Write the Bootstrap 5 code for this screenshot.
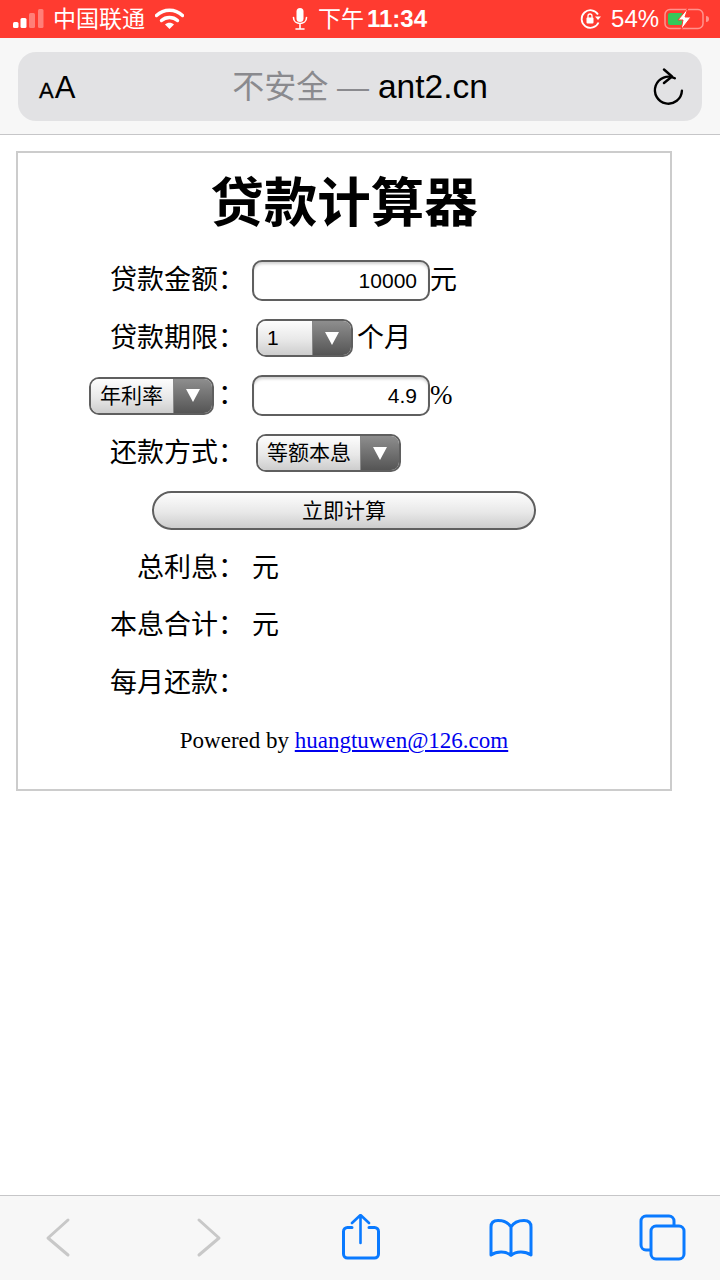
<!DOCTYPE html>
<html lang="zh-CN">

<head>
  <meta charset="UTF-8" />
  <meta name="viewport" content="width=device-width, initial-scale=1" />
  <title>贷款计算器</title>
  <link href="https://cdn.jsdelivr.net/npm/bootstrap@5.3.3/dist/css/bootstrap.min.css" rel="stylesheet" />
  <style>
    body {
      width: 720px;
      height: 1280px;
      overflow: hidden;
      background: #fff;
      color: #000;
      font-family: "Liberation Sans", "Noto Sans CJK SC", sans-serif;
    }

    .status-bar {
      height: 38px;
      background: #ff3b30;
      color: #fff;
      font-size: 23px;
      line-height: 38px;
      white-space: nowrap;
    }

    .status-bar svg { flex: none; }
    .carrier { margin: 0 10px 0 4px; width: 92px; }
    .mic-icon { margin-left: 108px; }
    .clock { margin-left: 10px; }
    .clock b { font-weight: 700; font-size: 24px; margin-left: 3px; }
    .lock-icon { margin-left: 153px; }
    .batt-text { margin: 0 5px 0 10px; font-size: 24px; }

    .url-area {
      height: 97px;
      padding: 14px 18px 13px;
      background: #f7f7f7;
      border-bottom: 1px solid #c6c6c8;
    }

    .url-pill {
      height: 69px;
      background: #e2e2e4;
      border-radius: 18px;
      padding: 0 16px 0 21px;
    }

    .aa-text { width: 60px; line-height: 1; white-space: nowrap; padding-top: 2px; }
    .aa-small { font-size: 22px; -webkit-text-stroke: .3px #000; }
    .aa-big { font-size: 31px; margin-left: 1px; }
    .url-text { font-size: 32px; line-height: 1; white-space: nowrap; }
    .url-text .dim { color: #8a8a8e; }
    .url-host { font-size: 33.500px; }
    .reload-box { width: 65px; }

    .page-area { padding: 16px 48px 0 16px; }

    .calc-box {
      height: 640px;
      border: 2px solid #ccc;
    }

    .calc-title {
      height: 99px;
      margin: 0;
      font-size: 53.500px;
      font-weight: 700;
      line-height: 102px;
      text-align: center;
    }

    .calc-row {
      height: 57.500px;
      font-size: 27px;
      line-height: 1;
    }

    .calc-label {
      width: 227px;
      flex: none;
      text-align: right;
      white-space: nowrap;
    }

    .calc-value { padding-left: 7px; white-space: nowrap; }
    .calc-value.sel-gap { padding-left: 11px; }

    .ios-input {
      width: 178px;
      height: 41px;
      border: 2px solid #5f5f5f;
      border-radius: 10px;
      padding: 0 11px 0 0;
      font-size: 21px;
      text-align: right;
      color: #000;
      background: #fff;
      box-shadow: inset 0 3px 3px -1px #d0d0d0;
      font-family: inherit;
    }

    .ios-select {
      height: 38px;
      border: 2px solid #5f5f5f;
      border-radius: 10px;
      overflow: hidden;
      font-size: 21px;
      text-align: left;
    }

    .ios-select .sel-text {
      padding-left: 9px;
      line-height: 34px;
      background: linear-gradient(#fdfdfd, #e8e8e8 55%, #cdcdcd);
      border-right: 1px solid #888;
    }

    .ios-select .sel-arrow {
      width: 38px;
      background: linear-gradient(#8e8e8e, #555);
    }

    .ios-select .sel-arrow::after {
      content: "";
      border-left: 7px solid transparent;
      border-right: 7px solid transparent;
      border-top: 13px solid #fff;
    }

    .select-after { margin-left: 4px; }
    .select-colon { margin-right: 4px; }

    .calc-submit {
      display: block;
      width: 384px;
      height: 39px;
      padding: 0;
      margin-left: 134px;
      border: 2px solid #5f5f5f;
      border-radius: 20px;
      background: linear-gradient(#fdfdfd, #e8e8e8 55%, #cdcdcd);
      font-size: 21px;
      line-height: 34px;
      color: #000;
    }

    .powered {
      font-family: "Liberation Serif", serif;
      font-size: 23px;
      text-align: center;
    }

    .powered a { color: #0000ee; }
    .percent-sign { font-family: "Liberation Serif", serif; }
    .w-one { width: 55px; }
    .w-three { width: 83px; }
    .w-four { width: 103px; }

    .tool-bar {
      height: 85px;
      background: #f7f7f7;
      border-top: 1px solid #c6c6c8;
      padding: 0 34px 0 35px;
    }
  </style>
</head>

<body class="d-flex flex-column">

  <!-- iOS status bar -->
  <div class="status-bar d-flex align-items-center ps-2">
    <svg width="37" height="24" viewBox="0 0 37 24" class="ms-1">
      <rect x="1" y="15" width="5.500" height="6" rx="1.500" fill="#fff" />
      <rect x="8.500" y="11" width="6" height="10" rx="1.500" fill="#fff" />
      <rect x="17" y="6" width="6" height="15" rx="1.500" fill="#fff" fill-opacity=".35" />
      <rect x="26" y="2" width="5.500" height="19" rx="1.500" fill="#fff" fill-opacity=".35" />
    </svg>
    <span class="carrier">中国联通</span>
    <svg width="29" height="22" viewBox="0 0 29 22">
      <path d="M1.500 7.500C9 .5 20 .5 27.500 7.500" fill="none" stroke="#fff" stroke-width="3.400" stroke-linecap="round" />
      <path d="M6.500 12.500c4.500-4 11.500-4 16 0" fill="none" stroke="#fff" stroke-width="3.400" stroke-linecap="round" />
      <path d="M14.500 21l-4.500-4.600c2.500-2.200 6.500-2.200 9 0z" fill="#fff" />
    </svg>
    <svg class="mic-icon" width="16" height="24" viewBox="0 0 16 24">
      <rect x="4.500" y="1" width="7" height="14" rx="3.500" fill="#fff" />
      <path d="M1.500 10.500c0 8 13 8 13 0M8 17v4M4 22h8" fill="none" stroke="#fff" stroke-width="1.600" stroke-linecap="round" />
    </svg>
    <span class="clock">下午<b>11:34</b></span>
    <svg class="lock-icon" width="21" height="22" viewBox="0 0 21 22">
      <path d="M18.500 14.500A8.800 8.800 0 1 1 18 6.500" fill="none" stroke="#fff" stroke-width="1.800" />
      <path d="M15 8.500h6l-3 3.500z" fill="#fff" />
      <rect x="6.500" y="9.500" width="7" height="6" rx="1" fill="#fff" />
      <path d="M8 10V8a2 2 0 0 1 4 0v2" fill="none" stroke="#fff" stroke-width="1.300" />
    </svg>
    <span class="batt-text">54%</span>
    <svg width="46" height="22" viewBox="0 0 46 22">
      <rect x="1" y="1.500" width="38" height="19" rx="5" fill="none" stroke="#fff" stroke-opacity=".45" stroke-width="1.500" />
      <rect x="4" y="5" width="15" height="12" rx="2" fill="#34c759" />
      <path d="M42 8v6c2 0 3-1 3-3s-1-3-3-3z" fill="#fff" fill-opacity=".45" />
      <path d="M24 0L14 12h5l-2 10 10-13h-6z" fill="#fff" stroke="#ff3b30" stroke-width="1" />
    </svg>
  </div>

  <!-- Safari address bar -->
  <div class="url-area">
    <div class="url-pill d-flex align-items-center justify-content-between">
      <span class="aa-text"><span class="aa-small">A</span><span class="aa-big">A</span></span>
      <span class="url-text"><span class="dim">不安全 — </span><span class="url-host">ant2.cn</span></span>
      <span class="reload-box d-flex justify-content-end">
        <svg width="36" height="38" viewBox="0 0 36 38">
          <path d="M19.500 8.500A13.500 13.500 0 1 0 31 17" fill="none" stroke="#000" stroke-width="2.400" stroke-linecap="round" transform="rotate(24 18 22)" />
          <path d="M14 1.500l8 7-8 6.500" fill="none" stroke="#000" stroke-width="2.400" stroke-linecap="round" stroke-linejoin="round" />
        </svg>
      </span>
    </div>
  </div>

  <!-- Page content -->
  <main class="page-area flex-grow-1">
    <div class="calc-box">
      <h1 class="calc-title">贷款计算器</h1>

      <div class="calc-row d-flex align-items-center">
        <div class="calc-label">贷款金额：</div>
        <div class="calc-value d-flex align-items-center">
          <input class="ios-input" type="text" value="10000" />元
        </div>
      </div>

      <div class="calc-row d-flex align-items-center">
        <div class="calc-label">贷款期限：</div>
        <div class="calc-value sel-gap d-flex align-items-center">
          <div class="ios-select d-inline-flex">
            <span class="sel-text w-one">1</span>
            <span class="sel-arrow d-flex align-items-center justify-content-center"></span>
          </div><span class="select-after">个月</span>
        </div>
      </div>

      <div class="calc-row d-flex align-items-center">
        <div class="calc-label d-flex align-items-center justify-content-end">
          <div class="ios-select select-colon d-inline-flex">
            <span class="sel-text w-three">年利率</span>
            <span class="sel-arrow d-flex align-items-center justify-content-center"></span>
          </div>：
        </div>
        <div class="calc-value d-flex align-items-center">
          <input class="ios-input" type="text" value="4.9" /><span class="percent-sign">%</span>
        </div>
      </div>

      <div class="calc-row d-flex align-items-center">
        <div class="calc-label">还款方式：</div>
        <div class="calc-value sel-gap d-flex align-items-center">
          <div class="ios-select d-inline-flex">
            <span class="sel-text w-four">等额本息</span>
            <span class="sel-arrow d-flex align-items-center justify-content-center"></span>
          </div>
        </div>
      </div>

      <div class="calc-row d-flex align-items-center">
        <button class="calc-submit" type="button">立即计算</button>
      </div>

      <div class="calc-row d-flex align-items-center">
        <div class="calc-label">总利息：</div>
        <div class="calc-value">元</div>
      </div>

      <div class="calc-row d-flex align-items-center">
        <div class="calc-label">本息合计：</div>
        <div class="calc-value">元</div>
      </div>

      <div class="calc-row d-flex align-items-center">
        <div class="calc-label">每月还款：</div>
        <div class="calc-value"></div>
      </div>

      <div class="calc-row powered d-flex align-items-center justify-content-center">
        <span>Powered by <a href="#">huangtuwen@126.com</a></span>
      </div>
    </div>
  </main>

  <!-- Safari toolbar -->
  <div class="tool-bar d-flex align-items-center justify-content-between">
    <svg width="48" height="48" viewBox="0 0 48 48">
      <path d="M33 6L13 24 33 41" fill="none" stroke="#c8c8c8" stroke-width="3" stroke-linecap="round" stroke-linejoin="round" />
    </svg>
    <svg width="48" height="48" viewBox="0 0 48 48">
      <path d="M13 6l20 18L13 41" fill="none" stroke="#c8c8c8" stroke-width="3" stroke-linecap="round" stroke-linejoin="round" />
    </svg>
    <svg width="48" height="48" viewBox="0 0 48 48">
      <path d="M15 13.500h-4.500a4 4 0 0 0-4 4V40a4 4 0 0 0 4 4h27a4 4 0 0 0 4-4V17.500a4 4 0 0 0-4-4H32" fill="none" stroke="#0a7aff" stroke-width="3" stroke-linecap="round" />
      <path d="M23.500 29V1M15 9l8.500-8L32 9" fill="none" stroke="#0a7aff" stroke-width="2.600" stroke-linecap="round" stroke-linejoin="round" />
    </svg>
    <svg width="48" height="48" viewBox="0 0 48 48">
      <path d="M24 13C21 8 16 6.500 11 6.500 6 6.500 4 9 4 13V41C10 37 19 37 24 41.500 29 37 38 37 44 41V13C44 9 42 6.500 37 6.500 32 6.500 27 8 24 13zM24 13V41" fill="none" stroke="#0a7aff" stroke-width="3" stroke-linejoin="round" />
    </svg>
    <svg width="48" height="48" viewBox="0 0 48 48">
      <path d="M36 11V7a5 5 0 0 0-5-5H8a5 5 0 0 0-5 5v24a5 5 0 0 0 5 5h4" fill="none" stroke="#0a7aff" stroke-width="3" />
      <rect x="13" y="12" width="33" height="33" rx="5" fill="none" stroke="#0a7aff" stroke-width="3" />
    </svg>
  </div>

  <script src="https://cdn.jsdelivr.net/npm/bootstrap@5.3.3/dist/js/bootstrap.bundle.min.js"></script>
</body>

</html>
